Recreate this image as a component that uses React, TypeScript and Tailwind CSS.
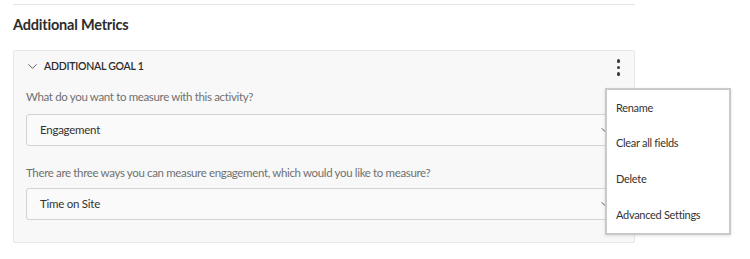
import { ChevronDown } from 'lucide-react'

const font = { fontFamily: 'Lato, "Open Sans", sans-serif' }

function Select({ value }: { value: string }) {
  return (
    <div className="flex h-[32px] items-center justify-between rounded-[3px] border border-[#d3d3d3] bg-[#fafafa] pl-[13px] pr-[10px]">
      <span className="text-[11.5px] tracking-[-0.25px] text-[#323232]">{value}</span>
      <ChevronDown className="h-[12px] w-[12px] text-[#555]" strokeWidth={2} />
    </div>
  )
}

const menuItems = ['Rename', 'Clear all fields', 'Delete', 'Advanced Settings']

export default function App() {
  return (
    <div className="min-h-[259px] w-[750px] bg-white" style={font}>
      <div className="relative ml-[13px] w-[622px] pt-[4px]">
        <div className="border-t border-[#e4e4e4]" />
        <h2 className="mt-[11px] text-[14.5px] font-bold leading-[18px] tracking-[-0.2px] text-[#2c2c2c]">
          Additional Metrics
        </h2>

        {/* Goal panel */}
        <div className="mt-[16px] rounded-[2px] border border-[#e8e8e8] bg-[#f8f8f8] px-[12px] pb-[22px]">
          <div className="flex h-[31px] items-center justify-between">
            <div className="flex items-center gap-[4px] -ml-[1px]">
              <ChevronDown className="h-[15px] w-[15px] text-[#4b4b4b]" strokeWidth={1.4} />
              <span className="text-[10.5px] font-semibold uppercase tracking-[-0.25px] text-[#2c2c2c]">
                Additional Goal 1
              </span>
            </div>
            <div className="mr-[2px] flex flex-col items-center gap-[3px] pt-[2px]">
              <span className="h-[3.5px] w-[3.5px] rounded-full bg-[#3a3a3a]" />
              <span className="h-[3.5px] w-[3.5px] rounded-full bg-[#3a3a3a]" />
              <span className="h-[3.5px] w-[3.5px] rounded-full bg-[#3a3a3a]" />
            </div>
          </div>

          <p className="mt-[7px] text-[11.5px] leading-[16px] tracking-[-0.35px] text-[#707070]">
            What do you want to measure with this activity?
          </p>
          <div className="mt-[9px]">
            <Select value="Engagement" />
          </div>

          <p className="mt-[19px] text-[11.5px] leading-[16px] tracking-[-0.35px] text-[#707070]">
            There are three ways you can measure engagement, which would you like to measure?
          </p>
          <div className="mt-[7px]">
            <Select value="Time on Site" />
          </div>
        </div>

        {/* Actions menu */}
        <div className="absolute left-[592px] top-[88px] flex w-[126px] flex-col border-2 border-[#c9c9c9] bg-white pl-[9px] shadow-[0_1px_3px_rgba(0,0,0,0.12)]">
          {menuItems.map((item) => (
            <div key={item} className="flex h-[35.7px] items-center text-[11px] tracking-[-0.3px] text-[#333]">
              {item}
            </div>
          ))}
        </div>
      </div>
    </div>
  )
}
